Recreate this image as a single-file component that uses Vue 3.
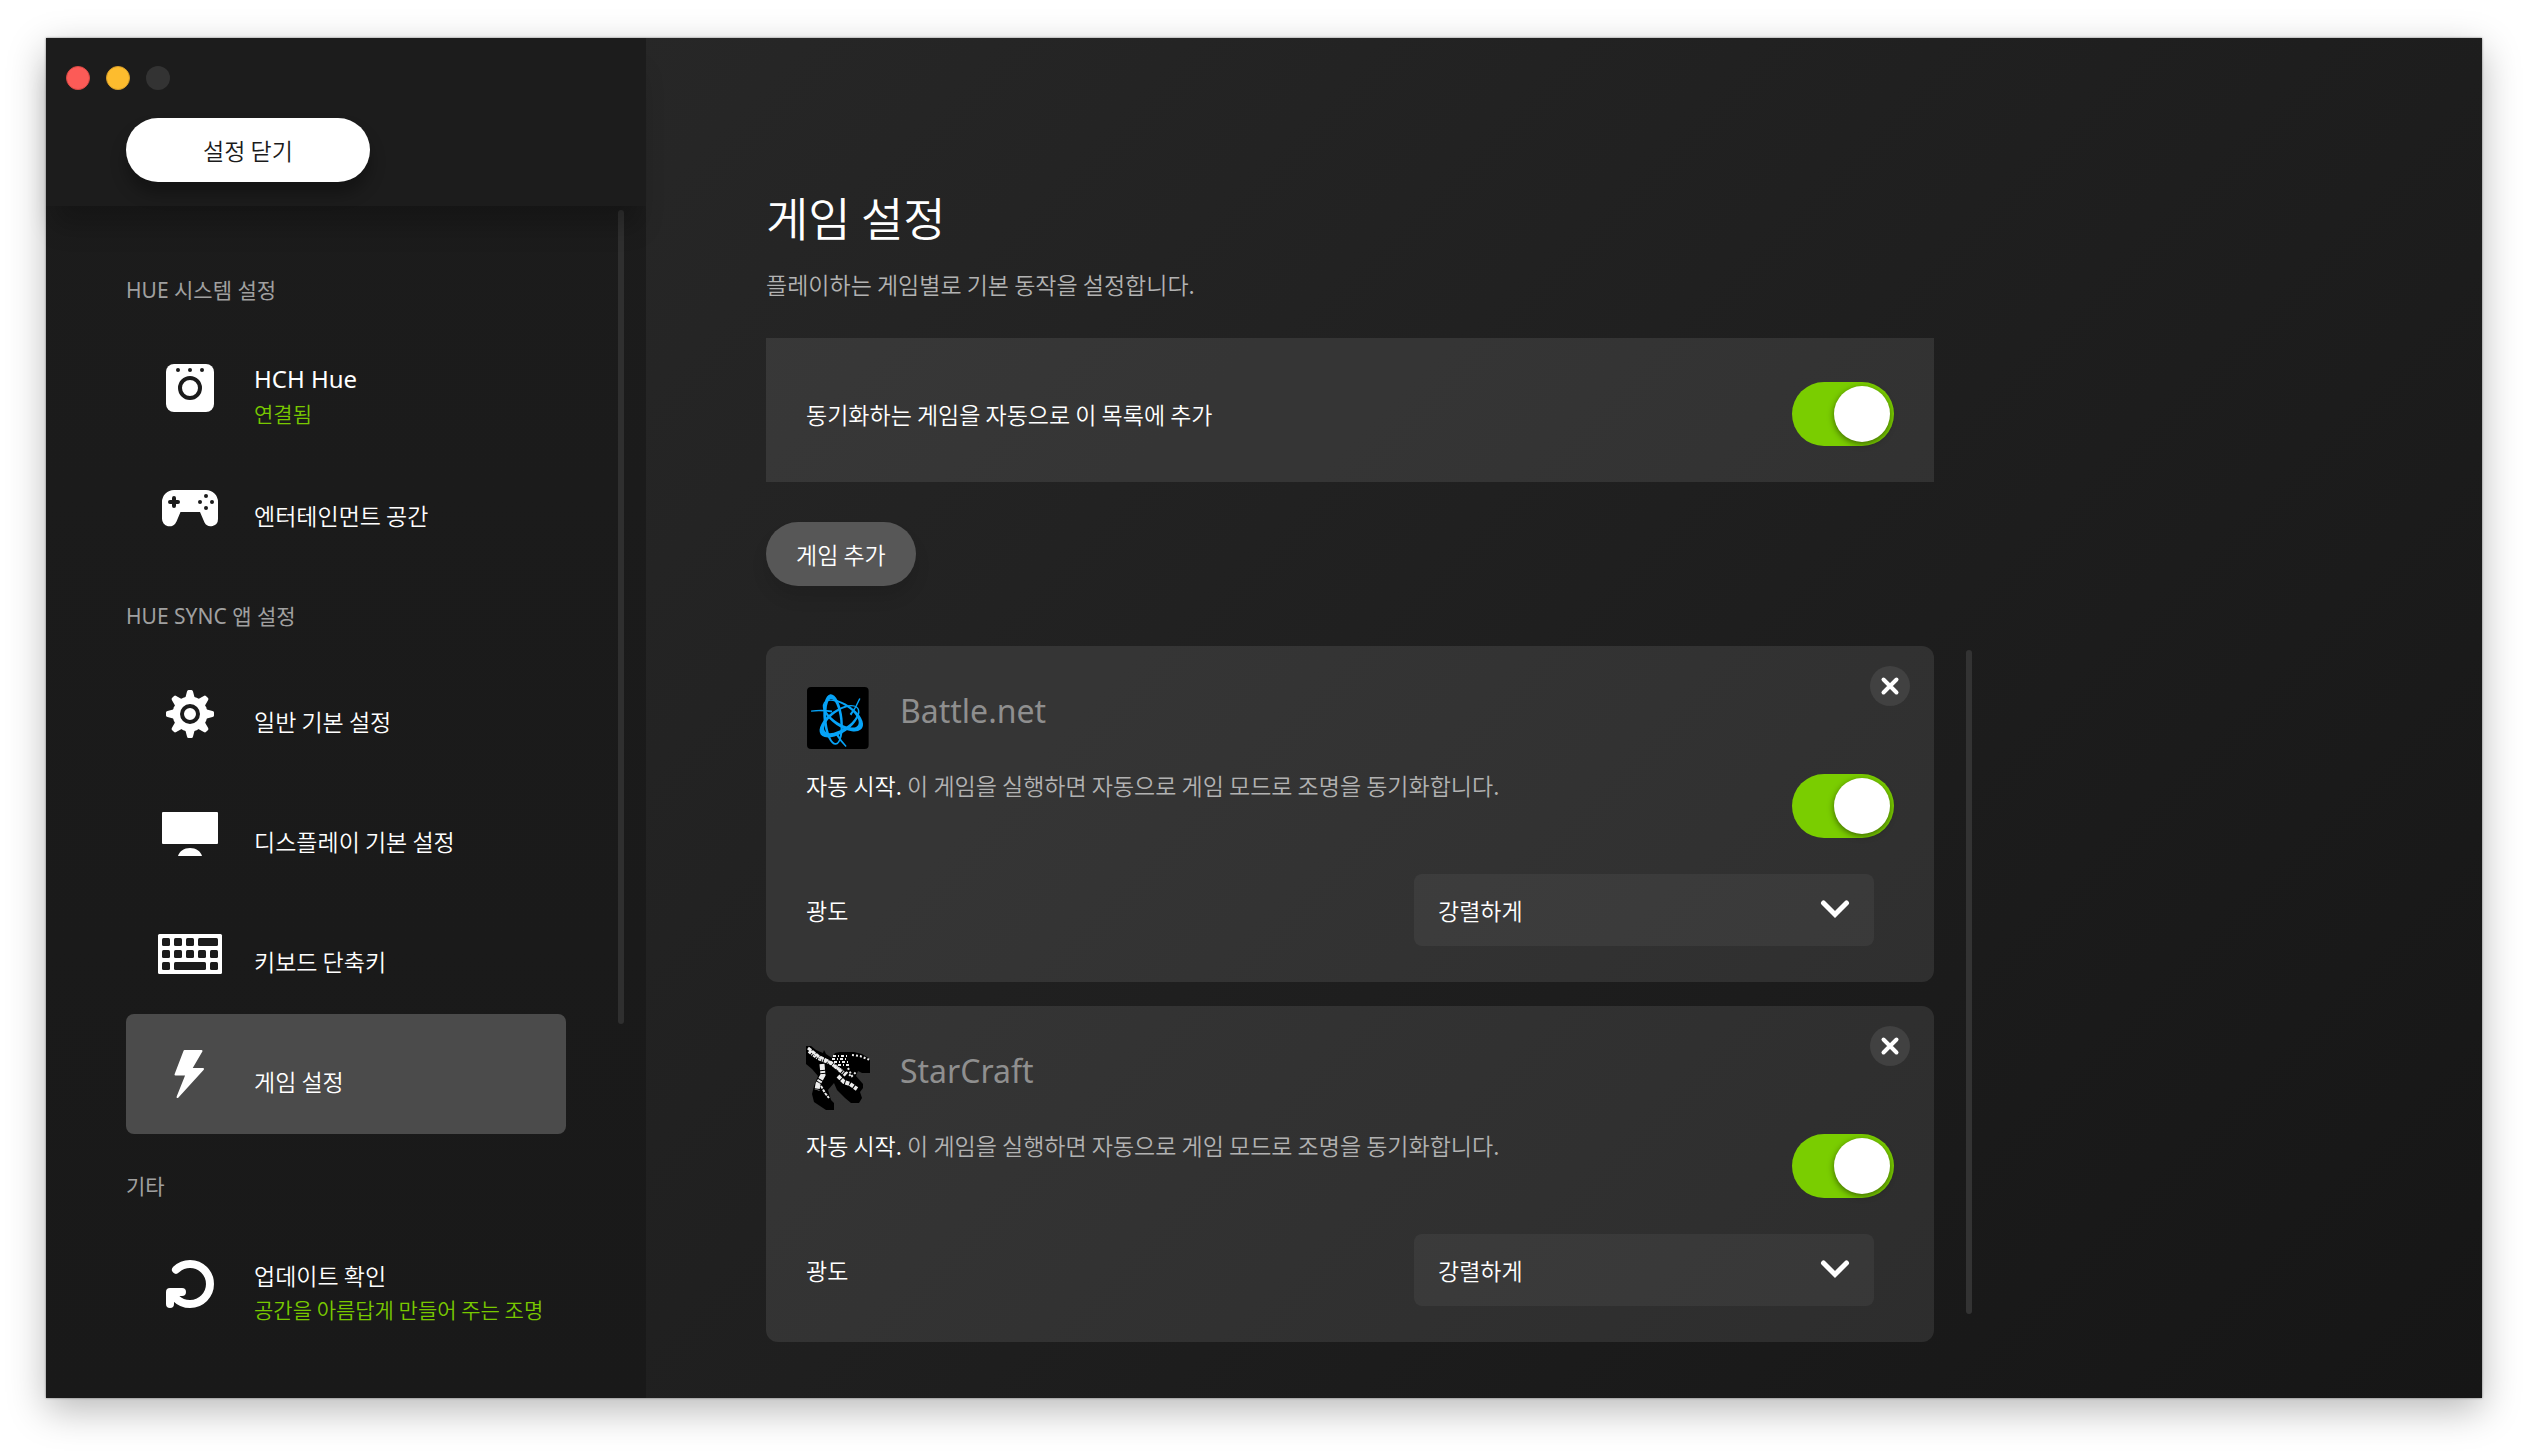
<script setup>
import { ref } from "vue";

const groups = [
  {
    title: "HUE 시스템 설정",
    items: [
      { id: "bridge", label: "HCH Hue", note: "연결됨", latin: true },
      { id: "area", label: "엔터테인먼트 공간" },
    ],
  },
  {
    title: "HUE SYNC 앱 설정",
    items: [
      { id: "general", label: "일반 기본 설정" },
      { id: "display", label: "디스플레이 기본 설정" },
      { id: "keyboard", label: "키보드 단축키" },
      { id: "games", label: "게임 설정" },
    ],
  },
  {
    title: "기타",
    items: [
      { id: "update", label: "업데이트 확인", note: "공간을 아름답게 만들어 주는 조명" },
    ],
  },
];

const current = ref("games");
const autoAdd = ref(true);

const games = ref([
  { id: "battlenet", name: "Battle.net", autoStart: true, level: "강렬하게" },
  { id: "starcraft", name: "StarCraft", autoStart: true, level: "강렬하게" },
]);

const levels = ["은은하게", "보통", "강하게", "강렬하게"];

const removeGame = (id) => {
  games.value = games.value.filter((game) => game.id !== id);
};
</script>

<template>
  <div class="desktop">
    <div class="window">
      <aside class="sidebar">
        <header class="sidebar-header">
          <div class="lights">
            <button class="light red" aria-label="닫기"></button>
            <button class="light yellow" aria-label="최소화"></button>
            <button class="light off" aria-label="확대" disabled></button>
          </div>
          <button class="btn-close-settings">설정 닫기</button>
        </header>

        <nav class="nav">
          <section v-for="group in groups" :key="group.title" class="nav-group">
            <h2 class="nav-title">{{ group.title }}</h2>
            <button
              v-for="item in group.items"
              :key="item.id"
              class="nav-item"
              :class="{ active: current === item.id }"
              @click="current = item.id"
            >
              <svg class="nav-icon" viewBox="0 0 72 72" aria-hidden="true">
                <g v-if="item.id === 'bridge'">
                  <rect x="12" y="12" width="48" height="48" rx="8" fill="#fff" />
                  <circle cx="24" cy="18" r="2" fill="#1b1b1b" />
                  <circle cx="36" cy="18" r="2" fill="#1b1b1b" />
                  <circle cx="48" cy="18" r="2" fill="#1b1b1b" />
                  <circle cx="36" cy="36" r="10" fill="none" stroke="#1b1b1b" stroke-width="4" />
                </g>
                <g v-else-if="item.id === 'area'">
                  <path
                    d="M20 18H52A12 12 0 0 1 64 30V47A7.2 7.2 0 0 1 50.500 50.500L46 40H26.500L22.500 49.500A7.500 7.500 0 0 1 8 46.500V30A12 12 0 0 1 20 18Z"
                    fill="#fff"
                  />
                  <path d="M20 26V34M16 30H24" stroke="#1b1b1b" stroke-width="4" stroke-linecap="round" />
                  <circle cx="52" cy="24" r="2" fill="#1b1b1b" />
                  <circle cx="46" cy="30" r="2" fill="#1b1b1b" />
                  <circle cx="58" cy="30" r="2" fill="#1b1b1b" />
                  <circle cx="52" cy="36" r="2" fill="#1b1b1b" />
                </g>
                <g v-else-if="item.id === 'general'">
                  <circle cx="36" cy="36" r="17.500" fill="#fff" />
                  <path
                    v-for="n in 8"
                    :key="n"
                    d="M31 21L33 13.500Q33.300 12 34.500 12H37.500Q38.700 12 39 13.500L41 21Z"
                    fill="#fff"
                    :transform="`rotate(${n * 45} 36 36)`"
                  />
                  <circle cx="36" cy="36" r="8" fill="none" stroke="#1b1b1b" stroke-width="4" />
                </g>
                <g v-else-if="item.id === 'display'" fill="#fff">
                  <rect x="8" y="14" width="56" height="32" rx="1" />
                  <path d="M24 58C25.500 53 30 50 36 50S46.500 53 48 58Z" />
                </g>
                <g v-else-if="item.id === 'keyboard'">
                  <rect x="4" y="16" width="64" height="40" rx="1.500" fill="#fff" />
                  <g fill="#1b1b1b">
                    <rect v-for="x in [8, 20, 32]" :key="'a' + x" :x="x" y="20" width="8" height="8" rx="1.500" />
                    <rect x="44" y="20" width="20" height="8" rx="1.500" />
                    <rect v-for="x in [8, 20, 32, 44, 56]" :key="'b' + x" :x="x" y="32" width="8" height="8" rx="1.500" />
                    <rect x="8" y="44" width="8" height="8" rx="1.500" />
                    <rect x="20" y="44" width="32" height="8" rx="1.500" />
                    <rect x="56" y="44" width="8" height="8" rx="1.500" />
                  </g>
                </g>
                <path
                  v-else-if="item.id === 'games'"
                  d="M30.500 13H47.500L37 31H49L23.500 59L32.500 36.500H21.500Z"
                  fill="#fff"
                  stroke="#fff"
                  stroke-width="2"
                  stroke-linejoin="round"
                />
                <g v-else fill="none" stroke="#fff" stroke-width="8">
                  <path d="M22 21.700A20 20 0 1 1 22 50.300" stroke-linecap="round" />
                  <path d="M28 44H16V56" stroke-linecap="round" stroke-linejoin="round" />
                </g>
              </svg>
              <span class="nav-text">
                <span class="nav-label" :class="{ latin: item.latin }">{{ item.label }}</span>
                <span v-if="item.note" class="nav-note">{{ item.note }}</span>
              </span>
            </button>
          </section>
          <div class="nav-thumb"></div>
        </nav>
      </aside>

      <main class="content">
        <h1 class="title">게임 설정</h1>
        <p class="subtitle">플레이하는 게임별로 기본 동작을 설정합니다.</p>

        <div class="auto-add">
          <label for="auto-add">동기화하는 게임을 자동으로 이 목록에 추가</label>
          <input id="auto-add" v-model="autoAdd" type="checkbox" class="toggle" />
        </div>

        <button class="btn-add">게임 추가</button>

        <div class="list-wrap">
          <div class="game-list">
            <article v-for="game in games" :key="game.id" class="game-card">
              <button class="btn-remove" aria-label="게임 삭제" @click="removeGame(game.id)">
                <svg viewBox="0 0 40 40" aria-hidden="true">
                  <path d="M13.500 13.500L26.500 26.500M26.500 13.500L13.500 26.500" stroke="#fff" stroke-width="4" stroke-linecap="round" />
                </svg>
              </button>

              <div class="game-head">
                <svg v-if="game.id === 'battlenet'" class="game-icon" viewBox="21 18 189 189" aria-hidden="true">
                  <rect x="24" y="21" width="182" height="183" rx="12" fill="#000" />
                  <g fill="#06a3f7" fill-rule="evenodd">
                    <path
                      transform="translate(101 117) rotate(84)"
                      d="M-75 0A75 28 0 1 1 75 0A75 28 0 1 1 -75 0ZM-61 0A65 20 0 1 0 70 -1A65 20 0 1 0 -61 0Z"
                    />
                    <path
                      transform="translate(120 122) rotate(-35)"
                      d="M-68 0A68 34 0 1 1 68 0A68 34 0 1 1 -68 0ZM-52 0A58 26 0 1 0 64 -2A58 26 0 1 0 -52 0Z"
                    />
                    <path
                      transform="translate(130 105) rotate(34)"
                      d="M-68 0A68 34 0 1 1 68 0A68 34 0 1 1 -68 0ZM-64 0A58 26 0 1 0 53 -2A58 26 0 1 0 -64 0Z"
                    />
                    <path d="M36 90Q65 86 98 90L98 96Q66 91 36 94Z" />
                    <path d="M178 54L182 56Q170 83 155 105L150 101Q168 80 178 54Z" />
                    <path d="M106 158L113 155Q125 178 141 195L138 198Q120 180 106 158Z" />
                  </g>
                </svg>
                <svg v-else class="game-icon" viewBox="0 0 64 64" aria-hidden="true">
                  <path
                    d="M0 0H5L10 4L17 7L18 4L20 8L26 12L29 7L34 6H48L56 8L64 13V27H56L52 25L50 30L57 38V42L54 46L56 52L53 57H45L39 52L31 44L28 37L22 44L25 54L28 57V64H20L8 56L6 48L8 40L12 30L6 23L0 18Z"
                    fill="#000"
                  />
                  <g fill="none" stroke="#ededed">
                    <path d="M2 2L12 10L22 15L34 24" stroke-width="3" stroke-dasharray="4 1" />
                    <path d="M3 5L12 12L25 17L40 29" stroke-width="4" stroke-dasharray="3 1 1 1" />
                    <path d="M16 18L17 29L12 38L11 44" stroke-width="5" stroke-dasharray="6 1 2 1" />
                    <path d="M15 40L19 47L23 52" stroke-width="2" stroke-dasharray="3 1" />
                    <path d="M32 30L38 36L44 38L51 43" stroke-width="4" stroke-dasharray="4 1" />
                    <path d="M27 10H42M26 13H42M28 16H42M32 19H43" stroke-width="2" stroke-dasharray="3 2 1 2" />
                    <path d="M46 9L54 10L64 14" stroke-width="2" stroke-dasharray="2 2" />
                    <path d="M42 22L46 30L50 26M40 26L46 31" stroke-width="2" stroke-dasharray="2 2" />
                  </g>
                  <path d="M8 9L18 16M28 18L40 27M13 36L15 40" stroke="#777" stroke-dasharray="1 2" />
                </svg>
                <h3 class="game-name">{{ game.name }}</h3>
              </div>

              <div class="game-row">
                <label :for="game.id + '-auto'" class="game-desc">
                  <span class="strong">자동 시작.</span> 이 게임을 실행하면 자동으로 게임 모드로 조명을 동기화합니다.
                </label>
                <input :id="game.id + '-auto'" v-model="game.autoStart" type="checkbox" class="toggle" />
              </div>

              <div class="level-row">
                <label :for="game.id + '-level'">광도</label>
                <div class="select-box">
                  <select :id="game.id + '-level'" v-model="game.level">
                    <option v-for="level in levels" :key="level">{{ level }}</option>
                  </select>
                  <svg class="chevron" viewBox="0 0 30 20" aria-hidden="true">
                    <path d="M3.500 4L15 15.500L26.500 4" fill="none" stroke="#fff" stroke-width="5" stroke-linecap="round" />
                  </svg>
                </div>
              </div>
            </article>
          </div>
          <div class="list-thumb"></div>
        </div>
      </main>
    </div>
  </div>
</template>

<style>
body {
  background: #fff;
}
</style>

<style scoped>
* {
  box-sizing: border-box;
}

.desktop {
  display: flex;
  min-height: 100vh;
  padding: 38px 46px 54px;
  font-family: "Noto Sans CJK KR", sans-serif;
  font-size: 23px;
  font-weight: 350;
  line-height: 36px;
  color: #fff;
}

h1, h2, h3, p {
  margin: 0;
  font-weight: inherit;
}

button, select {
  padding: 0;
  border: 0;
  font: inherit;
  color: inherit;
  cursor: pointer;
}

/* Window */
.window {
  display: flex;
  flex: 1;
  background: linear-gradient(135deg, #2a2a2a, #161616);
  box-shadow: 0 0 2px rgba(0, 0, 0, 0.5), 0 12px 36px rgba(0, 0, 0, 0.28);
}

/* Sidebar */
.sidebar {
  display: flex;
  flex-direction: column;
  flex: none;
  width: 600px;
  background: linear-gradient(#1c1c1c, #191919);
}

.sidebar-header {
  position: relative;
  z-index: 1;
  height: 168px;
  padding: 28px 20px 24px;
  background: #1c1c1c;
  box-shadow: 0 28px 24px -8px rgba(0, 0, 0, 0.22);
}

.lights {
  display: flex;
  gap: 16px;
  margin-bottom: 28px;
}

.light {
  width: 24px;
  height: 24px;
  border-radius: 50%;
}

.red {
  background: #fc5b57;
  border: 1px solid #d94844;
}

.yellow {
  background: #fdbc2e;
  border: 1px solid #d79d28;
}

.off {
  background: #333;
}

.btn-close-settings {
  width: 244px;
  height: 64px;
  margin-left: 60px;
  border-radius: 32px;
  background: #fff;
  color: #1b1b1b;
  box-shadow: 0 12px 16px rgba(0, 0, 0, 0.3);
}

.nav {
  position: relative;
  flex: 1;
  padding: 68px 80px 52px;
}

.nav-thumb {
  position: absolute;
  top: 4px;
  right: 22px;
  width: 6px;
  height: 68.3%;
  border-radius: 3px;
  background: #2f2f2f;
}

.nav-group + .nav-group {
  padding-top: 32px;
}

.nav-group:last-of-type {
  padding-top: 36px;
}

.nav-title {
  margin-bottom: 22px;
  font-family: "Noto Sans", "Noto Sans CJK KR", sans-serif;
  font-size: 21px;
  line-height: 32px;
  font-weight: 400;
  color: #a0a0a0;
}

.nav-item {
  display: flex;
  align-items: center;
  gap: 28px;
  width: 440px;
  height: 120px;
  padding-left: 28px;
  border-radius: 8px;
  background: none;
  text-align: left;
}

.nav-item.active {
  background: #4b4b4b;
}

.nav-icon {
  flex: none;
  width: 72px;
  height: 72px;
}

.nav-text {
  display: flex;
  flex-direction: column;
  padding-top: 14px;
  white-space: nowrap;
}

.nav-label.latin {
  font-family: "Noto Sans", sans-serif;
  font-size: 24px;
  font-weight: 400;
}

.nav-note {
  font-size: 21px;
  line-height: 32px;
  color: #78c800;
}

/* Content */
.content {
  flex: 1;
  min-width: 0;
  padding: 146px 120px 56px;
}

.title {
  font-size: 46px;
  line-height: 64px;
}

.subtitle {
  margin: 18px 0 36px;
  color: #b2b2b2;
}

.auto-add {
  display: flex;
  align-items: center;
  justify-content: space-between;
  max-width: 1168px;
  height: 144px;
  padding: 8px 40px 0;
  background: rgba(255, 255, 255, 0.09);
}

.btn-add {
  margin: 40px 0 60px;
  height: 64px;
  padding: 0 30px;
  border-radius: 32px;
  background: #575757;
  box-shadow: 0 12px 16px rgba(0, 0, 0, 0.1);
}

.toggle {
  position: relative;
  flex: none;
  width: 102px;
  height: 64px;
  margin: 0;
  border-radius: 32px;
  background: #555;
  appearance: none;
  cursor: pointer;
}

.toggle::before {
  content: "";
  position: absolute;
  top: 4px;
  left: 4px;
  width: 56px;
  height: 56px;
  border-radius: 50%;
  background: #fff;
  box-shadow: 0 2px 6px rgba(0, 0, 0, 0.5);
}

.toggle:checked {
  background: #7acd00;
}

.toggle:checked::before {
  left: 42px;
}

.list-wrap {
  display: flex;
  gap: 32px;
}

.game-list {
  display: flex;
  flex: 1;
  flex-direction: column;
  gap: 24px;
  max-width: 1168px;
}

.list-thumb {
  width: 6px;
  margin: 4px 0 28px;
  border-radius: 3px;
  background: #333;
}

.game-card {
  position: relative;
  padding: 40px 40px 36px;
  border-radius: 12px;
  background: rgba(255, 255, 255, 0.09);
}

.btn-remove {
  position: absolute;
  top: 20px;
  right: 24px;
  width: 40px;
  height: 40px;
  border-radius: 50%;
  background: #414141;
}

.btn-remove svg {
  display: block;
}

.game-head {
  display: flex;
  gap: 30px;
  height: 64px;
  margin-bottom: 24px;
}

.game-icon {
  width: 64px;
  height: 64px;
}

.game-name {
  font-family: "Noto Sans", sans-serif;
  font-size: 32px;
  font-weight: 400;
  line-height: 50px;
  color: #8f8f8f;
}

.game-row {
  display: flex;
  align-items: flex-start;
  justify-content: space-between;
  margin-bottom: 36px;
}

.game-desc {
  line-height: 22px;
  color: #b2b2b2;
}

.strong {
  color: #fff;
}

.level-row {
  display: flex;
  align-items: center;
  justify-content: space-between;
  padding-right: 20px;
}

.select-box {
  position: relative;
  width: 460px;
}

.select-box select {
  display: block;
  width: 100%;
  height: 72px;
  padding: 0 72px 0 24px;
  border-radius: 8px;
  background: rgba(255, 255, 255, 0.05);
  appearance: none;
}

.select-box option {
  background: #333;
}

.chevron {
  position: absolute;
  top: 25px;
  right: 24px;
  width: 30px;
  height: 20px;
  pointer-events: none;
}
</style>
